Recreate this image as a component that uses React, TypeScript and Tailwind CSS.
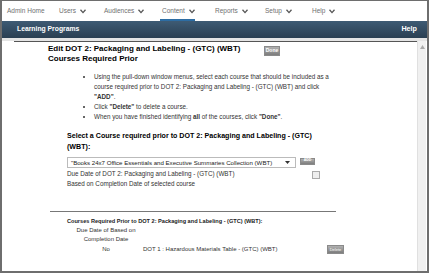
import React from "react";

const Chevron = () => (
  <svg width="6" height="5" viewBox="0 0 6 5" className="inline-block ml-[4px]">
    <path d="M0.5 0.8 L3 3.6 L5.5 0.8" stroke="#555" strokeWidth="1.3" fill="none" />
  </svg>
);

const GrayBtn = ({ children, cls }: { children: React.ReactNode; cls: string }) => (
  <div
    className={`flex items-center justify-center text-white font-bold bg-gradient-to-b from-[#b0b0b0] to-[#7d7d7d] border border-[#8a8a8a] ${cls}`}
  >
    {children}
  </div>
);

export default function App() {
  const navItems: { label: string; chev: boolean; active?: boolean; w: string }[] = [
    { label: "Admin Home", chev: false, w: "w-[52px]" },
    { label: "Users", chev: true, w: "w-[45px]" },
    { label: "Audiences", chev: true, w: "w-[58px]" },
    { label: "Content", chev: true, active: true, w: "w-[53px]" },
    { label: "Reports", chev: true, w: "w-[50px]" },
    { label: "Setup", chev: true, w: "w-[47px]" },
    { label: "Help", chev: true, w: "w-[40px]" },
  ];
  return (
    <div
      className="w-[429px] h-[273px] border-l-2 border-r-2 border-t border-b-2 border-[#6e6e6e] bg-white flex flex-col overflow-hidden text-[#222]"
      style={{ fontFamily: '"Liberation Sans", Arial, sans-serif' }}
    >
      {/* top nav */}
      <div className="h-[20px] flex items-stretch pl-[5px] text-[6.5px] text-[#707070] shrink-0">
        {navItems.map((n) => (
          <div key={n.label} className={`${n.w} flex items-center relative`}>
            <span>{n.label}</span>
            {n.chev && <Chevron />}
            {n.active && (
              <div className="absolute left-[-2px] bottom-0 w-[35px] h-[2px] bg-[#2d6da3]" />
            )}
          </div>
        ))}
      </div>
      {/* dark bar */}
      <div className="h-[17px] shrink-0 bg-gradient-to-b from-[#3e5b74] to-[#2a3f52] flex items-center justify-between pl-[15px] pr-[10px] text-white text-[6.8px] font-bold">
        <span>Learning Programs</span>
        <span className="text-[7.2px]">Help</span>
      </div>
      <div className="h-[3px] shrink-0 bg-[#e4e4e4]" />
      {/* content */}
      <div className="flex-1 flex min-h-0">
        <div className="flex-1 ml-[12px] border-t border-[#555] pl-[34px] pt-[1px] relative">
          <div className="flex items-start">
            <div className="text-[8px] font-bold leading-[10px] text-black w-[216px] pt-[1px]">
              Edit DOT 2: Packaging and Labeling - (GTC) (WBT)
              <br />
              Courses Required Prior
            </div>
            <GrayBtn cls="w-[16px] h-[10px] text-[5px] mt-[3px]">Done</GrayBtn>
          </div>
          <ul className="mt-[8px] ml-[37px] w-[250px] text-[6.3px] leading-[10px] text-[#333] list-disc pl-[9px]">
            <li>
              Using the pull-down window menus, select each course that should be included as a
              course required prior to DOT 2: Packaging and Labeling - (GTC) (WBT) and click <b>"ADD"</b>.
            </li>
            <li>
              Click <b>"Delete"</b> to delete a course.
            </li>
            <li>
              When you have finished identifying <b>all</b> of the courses, click <b>"Done"</b>.
            </li>
          </ul>
          <div className="mt-[9px] ml-[19px] text-[7.1px] font-bold leading-[11px] text-black">
            Select a Course required prior to DOT 2: Packaging and Labeling - (GTC)
            <br />
            (WBT):
          </div>
          <div className="ml-[19px] mt-[4px] flex items-center">
            <div className="w-[229px] h-[11px] border border-[#bbb] flex items-center justify-between pl-[3px] pr-[5px] text-[6.1px] text-[#222]">
              <span>"Books 24x7 Office Essentials and Executive Summaries Collection (WBT)</span>
              <svg width="5" height="3" viewBox="0 0 5 3">
                <path d="M0 0 L5 0 L2.5 3 Z" fill="#333" />
              </svg>
            </div>
            <GrayBtn cls="ml-[4px] w-[15px] h-[7px] text-[3.5px] -mt-[3px]">ADD</GrayBtn>
          </div>
          <div className="ml-[19px] flex items-center text-[6.3px] leading-[9px] text-[#333]">
            <span className="w-[245px]">Due Date of DOT 2: Packaging and Labeling - (GTC) (WBT)</span>
            <div className="w-[8px] h-[8px] border border-[#aaa] bg-[#eee] mt-[3px]" />
          </div>
          <div className="ml-[19px] text-[6.3px] leading-[9px] text-[#333]">
            Based on Completion Date of selected course
          </div>
          <div className="mt-[23px] w-[286px] ml-[2px] h-px bg-[#777]" />
          <div className="ml-[19px] mt-[5px] text-[5.6px] font-bold leading-[9px] text-[#222]">
            Courses Required Prior to DOT 2: Packaging and Labeling - (GTC) (WBT):
          </div>
          <div className="ml-[21px] flex text-[6px] leading-[9px] text-[#333]">
            <div className="w-[74px] text-center">
              Due Date of Based on
              <br />
              Completion Date
            </div>
          </div>
          <div className="ml-[21px] mt-[1px] flex items-center text-[6px] leading-[9px] text-[#333]">
            <div className="w-[74px] text-center">No</div>
            <div className="w-[184px]">DOT 1 : Hazardous Materials Table - (GTC) (WBT)</div>
            <GrayBtn cls="w-[17px] h-[9px] text-[4px] font-normal">Delete</GrayBtn>
          </div>
        </div>
        <div className="w-[9px] mr-[1px] bg-[#f0f0f0] border-l border-[#e0e0e0] relative">
          <svg width="5" height="4" viewBox="0 0 5 4" className="absolute left-[2px] top-[4px]">
            <path d="M0 4 L2.5 0 L5 4 Z" fill="#aaa" />
          </svg>
        </div>
      </div>
    </div>
  );
}
